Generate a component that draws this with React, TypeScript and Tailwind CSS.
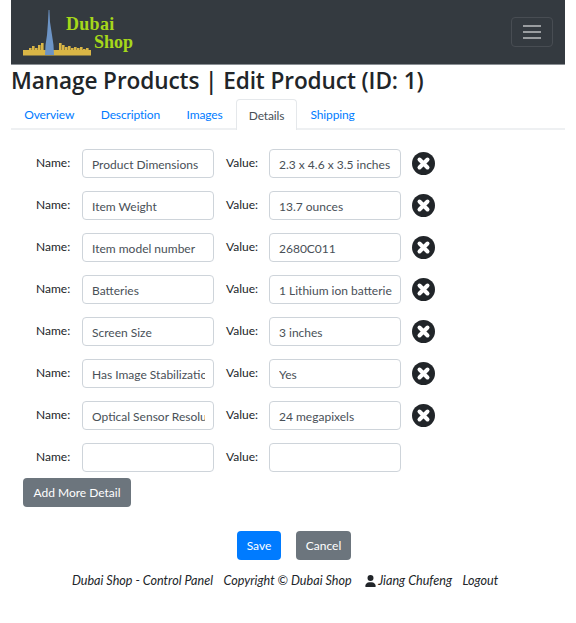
const rows = [
  ["Product Dimensions", "2.3 x 4.6 x 3.5 inches"],
  ["Item Weight", "13.7 ounces"],
  ["Item model number", "2680C011"],
  ["Batteries", "1 Lithium ion batteries required"],
  ["Screen Size", "3 inches"],
  ["Has Image Stabilization", "Yes"],
  ["Optical Sensor Resolution", "24 megapixels"],
  ["", ""],
];

function Logo() {
  const bars = [[0,4],[3,4],[6,6],[9,8],[12,6],[15,9],[18,11],[36,11],[39,9],[42,7],[45,8],[48,6],[51,7],[54,6],[57,7],[60,5],[63,6],[66,4]];
  return (
    <svg width="68" height="47" viewBox="0 0 68 47" className="block" aria-hidden="true">
      {bars.map(([x, h]) => (
        <rect key={x} x={x} y={45 - h} width="2.6" height={h + 1} fill="#dab646" />
      ))}
      <rect x="0" y="41" width="68" height="5.5" fill="#dab646" />
      <path d="M25.6 1 L26.4 1 L27 13 L29 26 L30.5 36 L31 46 L22 46 L22.5 36 L24 26 L25 13 Z" fill="#6c94c6" />
    </svg>
  );
}

const field = "h-[29px] w-[132px] rounded border border-[#ced4da] bg-white pl-[9px] pr-[8px] pt-[1px] text-[#495057] outline-none";

export default function App() {
  return (
    <div className="min-h-[623px] bg-white px-[11px] font-['Lato','Open_Sans',sans-serif] text-[12px] text-[#212529]">
      <nav className="flex h-[65px] items-center justify-between bg-[#343a40] pl-[12px] pr-[12px] border-b border-[#8a8f94]">
        <div className="relative h-[47px] w-[112px]">
          <Logo />
          <span className="absolute left-[43px] top-[4px] font-['Liberation_Serif',serif] text-[18px] font-bold leading-[22px] tracking-[0.3px] text-[#a6d81a]">Dubai</span>
          <span className="absolute left-[71px] top-[22px] font-['Liberation_Serif',serif] text-[18px] font-bold leading-[22px] text-[#a6d81a]">Shop</span>
        </div>
        <button className="flex h-[30px] w-[42px] flex-col items-center justify-center gap-[4px] rounded border border-[#484d53]">
          <span className="h-[2px] w-[18px] bg-[#9a9da0]" />
          <span className="h-[2px] w-[18px] bg-[#9a9da0]" />
          <span className="h-[2px] w-[18px] bg-[#9a9da0]" />
        </button>
      </nav>
      <h2 className="text-[22.6px] font-semibold leading-[32px] tracking-[-0.1px] font-['Open_Sans',sans-serif] text-[#212529]">Manage Products | Edit Product (ID: 1)</h2>
      <div className="mt-[2px] flex h-[31px] border-b-2 border-[#eef0f2] tracking-[-0.15px]">
        {["Overview", "Description", "Images", "Details", "Shipping"].map((t) =>
          t === "Details" ? (
            <div key={t} className="mb-[-2px] flex h-[31px] items-center rounded-t border border-b-0 border-[#e5e8eb] bg-white px-[12px] pt-[1px] text-[#495057]">{t}</div>
          ) : (
            <div key={t} className="flex items-center px-[13.3px] pt-[3px] text-[#007bff]">{t}</div>
          )
        )}
      </div>
      <div className="mt-[19px] flex flex-col gap-[13px] pl-[25px]">
        {rows.map(([name, value], i) => (
          <div key={i} className="flex h-[29px] items-center">
            <span className="w-[46px] pb-[1px]">Name:</span>
            <input readOnly value={name} className={field} />
            <span className="ml-[12px] w-[43px] pb-[1px]">Value:</span>
            <input readOnly value={value} className={field} />
            {name && (
              <svg className="ml-[11px]" width="23" height="23" viewBox="0 0 23 23" aria-hidden="true">
                <circle cx="11.5" cy="11.5" r="11.5" fill="#212529" />
                <path d="M7.5 7.5 L15.5 15.5 M15.5 7.5 L7.5 15.5" stroke="#fff" strokeWidth="4" strokeLinecap="round" />
              </svg>
            )}
          </div>
        ))}
      </div>
      <button className="ml-[12px] mt-[6px] block h-[29px] w-[108px] rounded bg-[#6c757d] text-white">Add More Detail</button>
      <div className="mt-[24px] flex justify-center gap-[15px] pl-[12px]">
        <button className="h-[29px] w-[44px] rounded bg-[#007bff] text-white">Save</button>
        <button className="h-[29px] w-[55px] rounded bg-[#6c757d] text-white">Cancel</button>
      </div>
      <footer className="mt-[11px] flex justify-center gap-[10.5px] pr-[6px] text-[12.6px] italic leading-[20px]">
        <span>Dubai Shop - Control Panel</span>
        <span>Copyright © Dubai Shop</span>
        <span className="ml-[3px] flex items-center gap-[2px]">
          <svg width="11" height="12" viewBox="0 0 448 512" fill="#212529" aria-hidden="true">
            <path d="M224 256A128 128 0 1 0 224 0a128 128 0 1 0 0 256zm-45.7 48C79.8 304 0 383.8 0 482.3 0 498.7 13.3 512 29.7 512h388.6c16.4 0 29.7-13.3 29.7-29.7C448 383.8 368.2 304 269.7 304H178.3z" />
          </svg>
          Jiang Chufeng
        </span>
        <span>Logout</span>
      </footer>
    </div>
  );
}
